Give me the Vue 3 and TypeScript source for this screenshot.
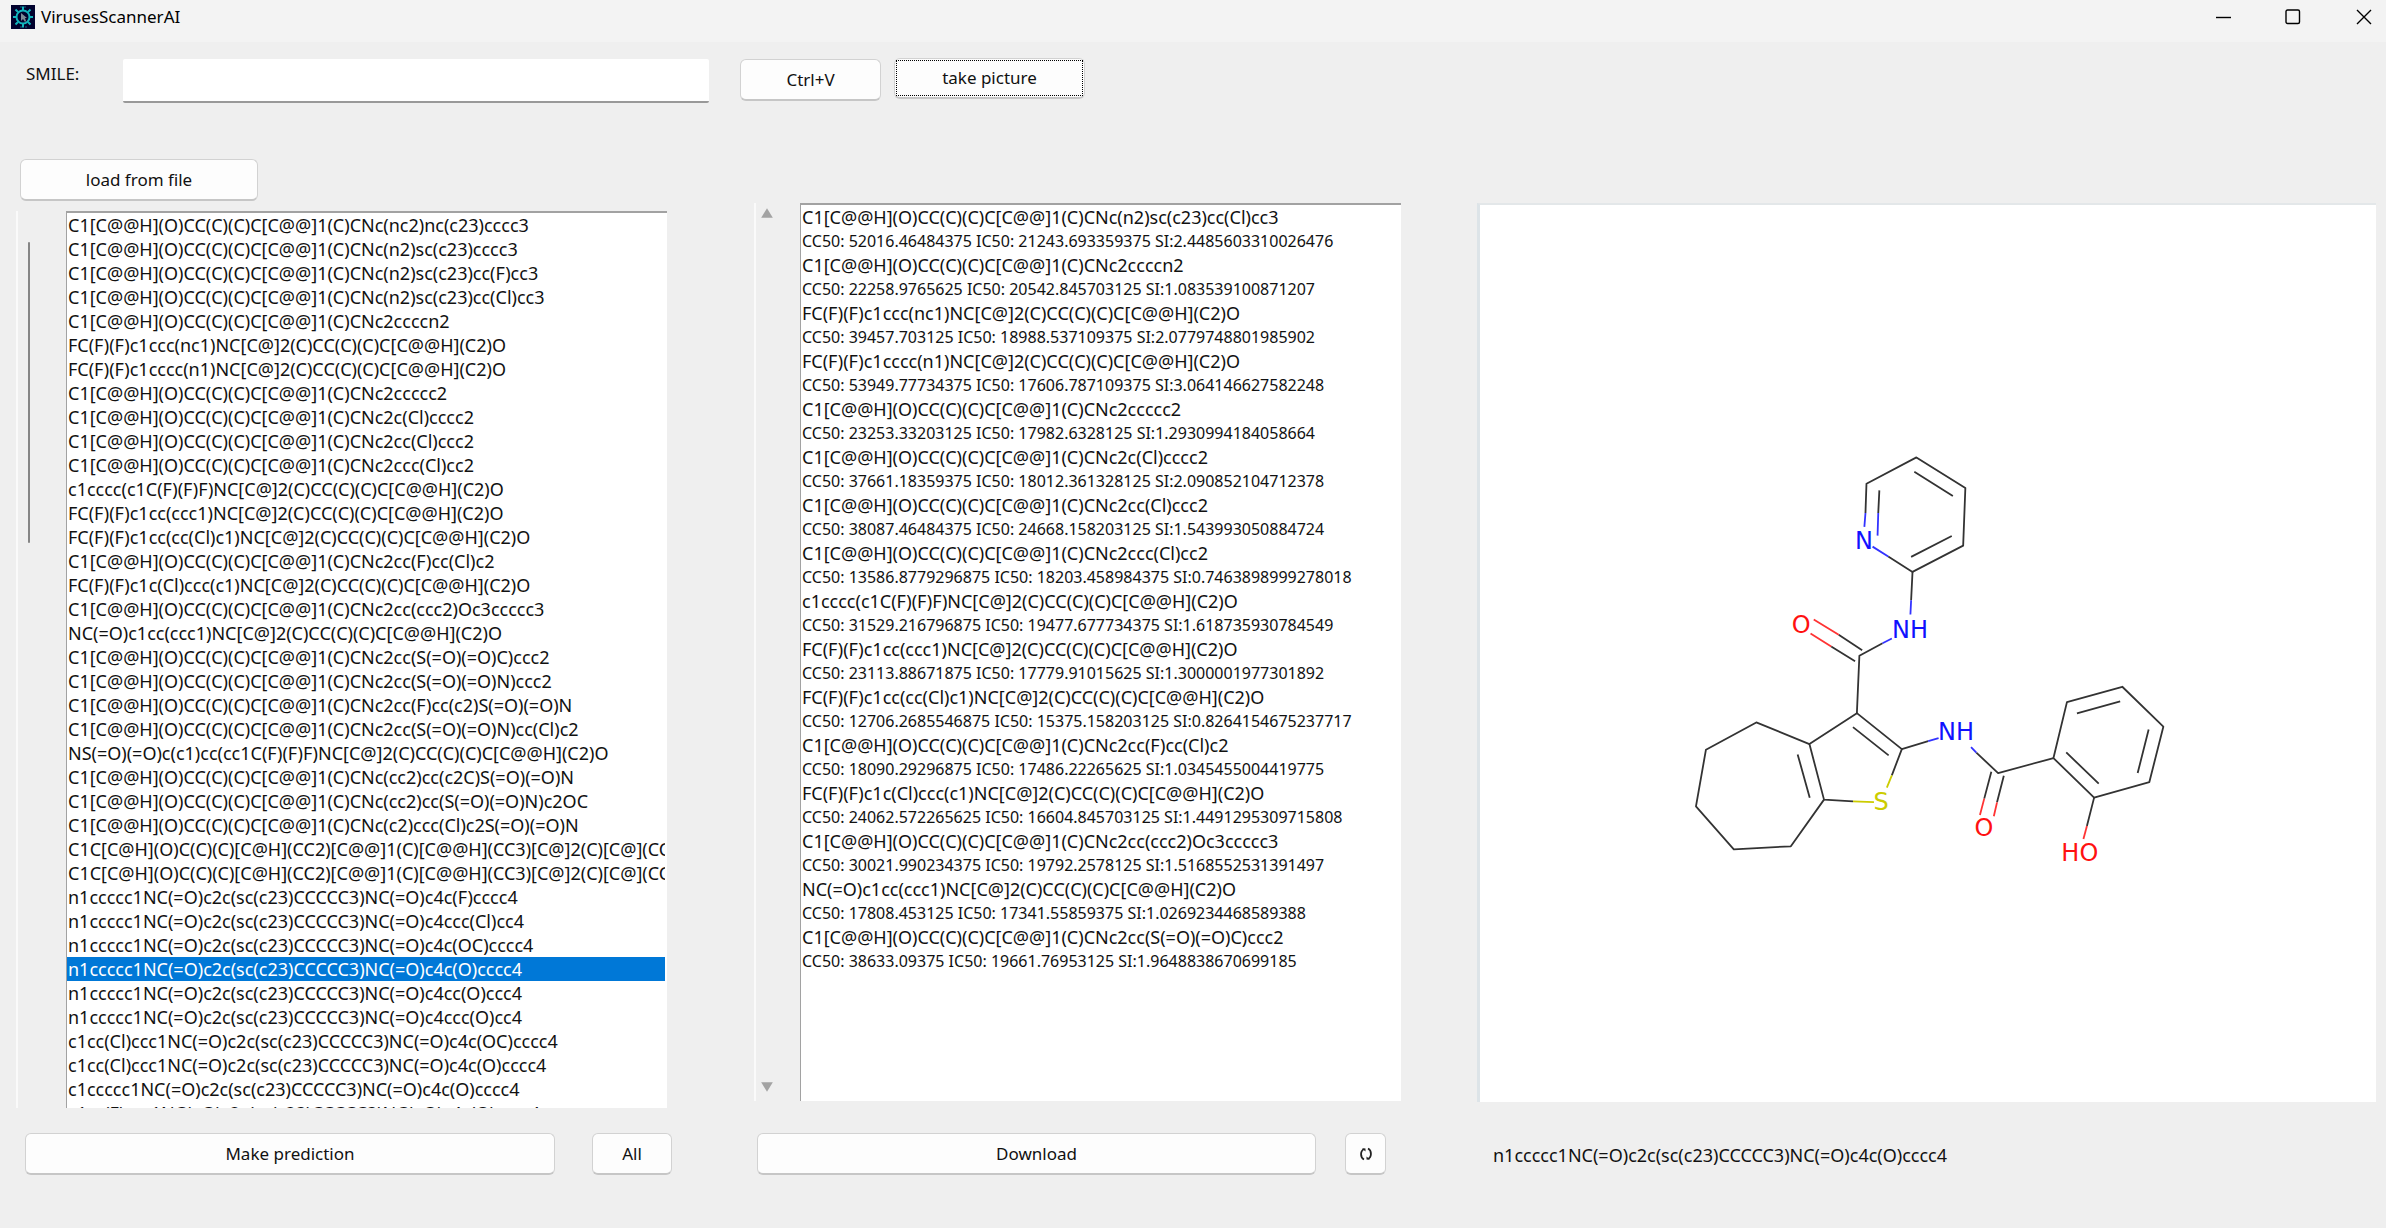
<script setup lang="ts">
import { ref } from 'vue'

interface Result {
  smile: string
  cc50: string
  ic50: string
  si: string
}

interface Atom {
  text: string
  x: number
  y: number
  kind: 'n' | 'o' | 's'
}

interface Bond {
  d: string
  kind: 'c' | 'n' | 'o' | 's'
}

const smile = ref('')
const selected = ref(31)

const smiles: string[] = [
  'C1[C@@H](O)CC(C)(C)C[C@@]1(C)CNc(nc2)nc(c23)cccc3',
  'C1[C@@H](O)CC(C)(C)C[C@@]1(C)CNc(n2)sc(c23)cccc3',
  'C1[C@@H](O)CC(C)(C)C[C@@]1(C)CNc(n2)sc(c23)cc(F)cc3',
  'C1[C@@H](O)CC(C)(C)C[C@@]1(C)CNc(n2)sc(c23)cc(Cl)cc3',
  'C1[C@@H](O)CC(C)(C)C[C@@]1(C)CNc2ccccn2',
  'FC(F)(F)c1ccc(nc1)NC[C@]2(C)CC(C)(C)C[C@@H](C2)O',
  'FC(F)(F)c1cccc(n1)NC[C@]2(C)CC(C)(C)C[C@@H](C2)O',
  'C1[C@@H](O)CC(C)(C)C[C@@]1(C)CNc2ccccc2',
  'C1[C@@H](O)CC(C)(C)C[C@@]1(C)CNc2c(Cl)cccc2',
  'C1[C@@H](O)CC(C)(C)C[C@@]1(C)CNc2cc(Cl)ccc2',
  'C1[C@@H](O)CC(C)(C)C[C@@]1(C)CNc2ccc(Cl)cc2',
  'c1cccc(c1C(F)(F)F)NC[C@]2(C)CC(C)(C)C[C@@H](C2)O',
  'FC(F)(F)c1cc(ccc1)NC[C@]2(C)CC(C)(C)C[C@@H](C2)O',
  'FC(F)(F)c1cc(cc(Cl)c1)NC[C@]2(C)CC(C)(C)C[C@@H](C2)O',
  'C1[C@@H](O)CC(C)(C)C[C@@]1(C)CNc2cc(F)cc(Cl)c2',
  'FC(F)(F)c1c(Cl)ccc(c1)NC[C@]2(C)CC(C)(C)C[C@@H](C2)O',
  'C1[C@@H](O)CC(C)(C)C[C@@]1(C)CNc2cc(ccc2)Oc3ccccc3',
  'NC(=O)c1cc(ccc1)NC[C@]2(C)CC(C)(C)C[C@@H](C2)O',
  'C1[C@@H](O)CC(C)(C)C[C@@]1(C)CNc2cc(S(=O)(=O)C)ccc2',
  'C1[C@@H](O)CC(C)(C)C[C@@]1(C)CNc2cc(S(=O)(=O)N)ccc2',
  'C1[C@@H](O)CC(C)(C)C[C@@]1(C)CNc2cc(F)cc(c2)S(=O)(=O)N',
  'C1[C@@H](O)CC(C)(C)C[C@@]1(C)CNc2cc(S(=O)(=O)N)cc(Cl)c2',
  'NS(=O)(=O)c(c1)cc(cc1C(F)(F)F)NC[C@]2(C)CC(C)(C)C[C@@H](C2)O',
  'C1[C@@H](O)CC(C)(C)C[C@@]1(C)CNc(cc2)cc(c2C)S(=O)(=O)N',
  'C1[C@@H](O)CC(C)(C)C[C@@]1(C)CNc(cc2)cc(S(=O)(=O)N)c2OC',
  'C1[C@@H](O)CC(C)(C)C[C@@]1(C)CNc(c2)ccc(Cl)c2S(=O)(=O)N',
  'C1C[C@H](O)C(C)(C)[C@H](CC2)[C@@]1(C)[C@@H](CC3)[C@]2(C)[C@](CC4)',
  'C1C[C@H](O)C(C)(C)[C@H](CC2)[C@@]1(C)[C@@H](CC3)[C@]2(C)[C@](CC4)',
  'n1ccccc1NC(=O)c2c(sc(c23)CCCCC3)NC(=O)c4c(F)cccc4',
  'n1ccccc1NC(=O)c2c(sc(c23)CCCCC3)NC(=O)c4ccc(Cl)cc4',
  'n1ccccc1NC(=O)c2c(sc(c23)CCCCC3)NC(=O)c4c(OC)cccc4',
  'n1ccccc1NC(=O)c2c(sc(c23)CCCCC3)NC(=O)c4c(O)cccc4',
  'n1ccccc1NC(=O)c2c(sc(c23)CCCCC3)NC(=O)c4cc(O)ccc4',
  'n1ccccc1NC(=O)c2c(sc(c23)CCCCC3)NC(=O)c4ccc(O)cc4',
  'c1cc(Cl)ccc1NC(=O)c2c(sc(c23)CCCCC3)NC(=O)c4c(OC)cccc4',
  'c1cc(Cl)ccc1NC(=O)c2c(sc(c23)CCCCC3)NC(=O)c4c(O)cccc4',
  'c1ccccc1NC(=O)c2c(sc(c23)CCCCC3)NC(=O)c4c(O)cccc4',
  'c1cc(F)ccc1NC(=O)c2c(sc(c23)CCCCC3)NC(=O)c4c(O)cccc4',
]

const results: Result[] = [
  { smile: smiles[3], cc50: '52016.46484375', ic50: '21243.693359375', si: '2.4485603310026476' },
  { smile: smiles[4], cc50: '22258.9765625', ic50: '20542.845703125', si: '1.083539100871207' },
  { smile: smiles[5], cc50: '39457.703125', ic50: '18988.537109375', si: '2.0779748801985902' },
  { smile: smiles[6], cc50: '53949.77734375', ic50: '17606.787109375', si: '3.064146627582248' },
  { smile: smiles[7], cc50: '23253.33203125', ic50: '17982.6328125', si: '1.2930994184058664' },
  { smile: smiles[8], cc50: '37661.18359375', ic50: '18012.361328125', si: '2.090852104712378' },
  { smile: smiles[9], cc50: '38087.46484375', ic50: '24668.158203125', si: '1.543993050884724' },
  { smile: smiles[10], cc50: '13586.8779296875', ic50: '18203.458984375', si: '0.7463898999278018' },
  { smile: smiles[11], cc50: '31529.216796875', ic50: '19477.677734375', si: '1.618735930784549' },
  { smile: smiles[12], cc50: '23113.88671875', ic50: '17779.91015625', si: '1.3000001977301892' },
  { smile: smiles[13], cc50: '12706.2685546875', ic50: '15375.158203125', si: '0.8264154675237717' },
  { smile: smiles[14], cc50: '18090.29296875', ic50: '17486.22265625', si: '1.0345455004419775' },
  { smile: smiles[15], cc50: '24062.572265625', ic50: '16604.845703125', si: '1.4491295309715808' },
  { smile: smiles[16], cc50: '30021.990234375', ic50: '19792.2578125', si: '1.5168552531391497' },
  { smile: smiles[17], cc50: '17808.453125', ic50: '17341.55859375', si: '1.0269234468589388' },
  { smile: smiles[18], cc50: '38633.09375', ic50: '19661.76953125', si: '1.9648838670699185' },
]

const bonds: Bond[] = [
  // pyridine ring
  { kind: 'c', d: 'M385.4 308.3L386.4 279L436.4 252.7L485.4 283.3L483.2 341L432.5 367.3L408.2 352' },
  { kind: 'n', d: 'M385.4 308.3L384.3 322.3M398.2 308.3L397.5 331M392.5 342L408.2 352' },
  { kind: 'c', d: 'M399.3 285.7L398.2 308.3M434.3 267L472.9 291.3M471.8 331.3L431.1 352.3' },
  // first amide
  { kind: 'c', d: 'M432.5 367.3L431.1 395.7M402.5 438.7L379.3 451.3L376.8 508.7' },
  { kind: 'n', d: 'M431.1 395.7L430.4 410M411.8 434L402.5 438.7' },
  { kind: 'c', d: 'M382.1 445.7L358.6 430.3M375 456.7L351.1 442' },
  { kind: 'o', d: 'M358.6 430.3L333.6 415M351.1 442L330.4 429' },
  // thiophene ring
  { kind: 'c', d: 'M411.8 571L421.8 544.7L376.8 508.7L329.3 539.7L343.9 595.3L372.9 597' },
  { kind: 'c', d: 'M372.9 522.7L408.6 551M317.5 550L329.6 593.3' },
  { kind: 's', d: 'M372.9 597L393.9 597.7M406.8 583.3L411.8 571' },
  // cycloheptane ring
  { kind: 'c', d: 'M329.3 539.7L276.1 518L225.7 545.3L215.7 602L253.6 645L310.7 642L343.9 595.3' },
  // second amide
  { kind: 'c', d: 'M421.8 544.7L448.2 536.7M496.4 548.3L518.2 568.7L573.6 553.7' },
  { kind: 'n', d: 'M448.2 536.7L458.6 533.7M491.1 542.7L496.4 548.3' },
  { kind: 'c', d: 'M511.4 567.3L504.3 594.3M523.9 571.3L517.1 598' },
  { kind: 'o', d: 'M504.3 594.3L500 610.7M517.1 598L513.9 612' },
  // phenol ring
  { kind: 'c', d: 'M573.6 553.7L587.1 497.7L642.5 482.3L683.6 522.3L669.6 577.7L614.3 593.3Z' },
  { kind: 'c', d: 'M597.1 509L640.4 497M668.9 525L657.9 568.7M618.9 579.3L586.4 548M614.3 593.3L607.1 621.7' },
  { kind: 'o', d: 'M607.1 621.7L603.6 634.7' },
]

const atoms: Atom[] = [
  { text: 'N', x: 384, y: 344, kind: 'n' },
  { text: 'NH', x: 430, y: 433, kind: 'n' },
  { text: 'O', x: 321, y: 428, kind: 'o' },
  { text: 'S', x: 401, y: 606, kind: 's' },
  { text: 'NH', x: 476, y: 536, kind: 'n' },
  { text: 'O', x: 504, y: 632, kind: 'o' },
  { text: 'HO', x: 600, y: 657, kind: 'o' },
]
</script>

<template>
  <div class="window">
    <header class="titlebar">
      <svg class="app-icon" viewBox="0 0 24 24" aria-hidden="true">
        <rect width="24" height="24" fill="#02022e" />
        <g fill="none" stroke="#12b5bd">
          <circle cx="12" cy="12" r="6.5" stroke-width="2" />
          <path
            d="M12 5V1.5M12 19v3.5M5 12H2M19 12h3M7 7L4.500 4.500M17 7l2.500-2.500M7 17l-2.500 2.500M17 17l2.500 2.500"
            stroke-width="2"
          />
          <path d="M9 2h2M13 2h2M9 22h2M14 22h2" stroke-width="1" opacity="0.600" />
        </g>
        <path d="M10 8v8l2-2 2 3 1-1-1-3h2z" fill="#7d8a94" />
      </svg>
      <h1 class="title">VirusesScannerAI</h1>
      <div class="window-controls">
        <button type="button" aria-label="Minimize">
          <svg viewBox="0 0 16 16"><path d="M1 8.500H16" /></svg>
        </button>
        <button type="button" aria-label="Maximize">
          <svg viewBox="0 0 16 16"><rect x="1" y="1" width="13.500" height="13.500" rx="1.500" /></svg>
        </button>
        <button type="button" aria-label="Close">
          <svg viewBox="0 0 16 16"><path d="M1 1L15 15M15 1L1 15" /></svg>
        </button>
      </div>
    </header>

    <form class="toolbar" @submit.prevent>
      <div class="entry">
        <label for="smile">SMILE:</label>
        <input id="smile" v-model="smile" type="text" />
      </div>
      <div class="entry-actions">
        <button type="button" class="btn paste">Ctrl+V</button>
        <button type="button" class="btn picture"><span>take picture</span></button>
      </div>
    </form>

    <main class="columns">
      <section class="column source">
        <button type="button" class="btn load">load from file</button>
        <div class="list-row">
          <div class="track"><div class="thumb"></div></div>
          <ul class="listbox" role="listbox" aria-label="Molecules">
            <li
              v-for="(item, i) in smiles"
              :key="i"
              role="option"
              :aria-selected="i === selected"
              :class="{ selected: i === selected }"
              @click="selected = i"
            >{{ item }}</li>
          </ul>
        </div>
        <div class="actions">
          <button type="button" class="btn wide">Make prediction</button>
          <button type="button" class="btn all">All</button>
        </div>
      </section>

      <section class="column results">
        <div class="list-row">
          <div class="track arrows">
            <svg viewBox="0 0 12 10" aria-hidden="true"><path d="M6 1L11 9H1z" /></svg>
            <svg viewBox="0 0 12 10" aria-hidden="true"><path d="M6 9L11 1H1z" /></svg>
          </div>
          <ul class="listbox" role="listbox" aria-label="Predictions">
            <template v-for="(r, i) in results" :key="i">
              <li role="option">{{ r.smile }}</li>
              <li role="option" class="values">CC50: {{ r.cc50 }} IC50: {{ r.ic50 }} SI:{{ r.si }}</li>
            </template>
          </ul>
        </div>
        <div class="actions">
          <button type="button" class="btn wide">Download</button>
          <button type="button" class="btn refresh" aria-label="Refresh">
            <svg viewBox="0 0 14 14" aria-hidden="true">
              <path d="M5.500 2C1 3.500 1 10.500 5 12.500M8.500 12C13 10.500 13 3.500 9 1.500" />
              <path class="tip" d="M3 1.500h3.500v3zM11 12.500H7.500v-3z" />
            </svg>
          </button>
        </div>
      </section>

      <section class="column preview">
        <figure>
          <div class="canvas">
            <svg viewBox="0 0 896 898" role="img" aria-label="Molecule structure">
              <path v-for="(b, i) in bonds" :key="i" :d="b.d" :class="['bond', b.kind]" />
              <text v-for="(a, i) in atoms" :key="i" :x="a.x" :y="a.y" :class="['atom', a.kind]">{{ a.text }}</text>
            </svg>
          </div>
          <figcaption>{{ smiles[selected] }}</figcaption>
        </figure>
      </section>
    </main>
  </div>
</template>

<style>
body {
  margin: 0;
}
</style>

<style scoped>
.window {
  display: flex;
  flex-direction: column;
  height: 100vh;
  background: #efefef;
  color: #111;
  font: 17px/24px "Noto Sans", "Open Sans", sans-serif;
}

.titlebar {
  display: flex;
  flex: none;
  align-items: flex-start;
  height: 42px;
  background: #f3f3f3;
}

.app-icon {
  width: 24px;
  height: 24px;
  margin: 5px 6px 0 11px;
}

.title {
  margin: 5px 0 0;
  font-size: 17px;
  font-weight: 400;
  line-height: 24px;
  color: #000;
}

.window-controls {
  display: flex;
  margin-left: auto;
}

.window-controls button {
  display: flex;
  align-items: center;
  justify-content: center;
  width: 70px;
  height: 34px;
  margin: 0;
  padding: 0;
  border: 0;
  background: none;
}

.window-controls button:last-child {
  width: 44px;
  margin-left: 14px;
}

.window-controls svg {
  width: 16px;
  height: 16px;
  fill: none;
  stroke: #000;
  stroke-width: 1.4;
}

.btn {
  box-sizing: border-box;
  height: 42px;
  padding: 0;
  border: 1px solid #d2d2d2;
  border-bottom: 2px solid #c6c6c6;
  border-radius: 6px;
  background: #fdfdfd;
  color: #111;
  font: inherit;
}

.toolbar,
.columns {
  display: grid;
  grid-template-columns: 738fr 739fr 909fr;
}

.toolbar {
  flex: none;
  height: 117px;
}

.entry {
  display: flex;
  align-items: flex-start;
  padding: 17px 29px 0 26px;
}

.entry label {
  flex: none;
  width: 97px;
  margin-top: 3px;
}

.entry input {
  box-sizing: border-box;
  flex: 1;
  min-width: 0;
  height: 44px;
  padding: 0 8px;
  border: 0;
  border-bottom: 2px solid #999;
  border-radius: 2px;
  background: #fff;
  font: inherit;
}

.entry-actions {
  display: flex;
  align-items: flex-start;
  gap: 13px;
  padding: 17px 0 0 2px;
}

.paste {
  width: 141px;
}

.picture {
  display: flex;
  width: 191px;
  height: 41px;
  margin-top: -1px;
  padding: 1px;
}

.picture span {
  display: flex;
  flex: 1;
  align-items: center;
  justify-content: center;
  align-self: stretch;
  border: 1px dotted #000;
}

.columns {
  flex: 1;
  min-height: 0;
}

.column {
  display: flex;
  flex-direction: column;
  min-width: 0;
  min-height: 0;
}

.load {
  flex: none;
  width: 238px;
  margin-left: 20px;
}

.list-row {
  display: flex;
  flex: 1;
  min-height: 0;
}

.source .list-row {
  margin: 10px 71px 25px 16px;
}

.results .list-row {
  margin: 44px 76px 32px 16px;
}

.track {
  box-sizing: border-box;
  flex: none;
  width: 50px;
  padding: 31px 0 0 10px;
  border-left: 2px solid #fafafa;
}

.thumb {
  width: 2px;
  height: 301px;
  border-radius: 1px;
  background: #858585;
}

.arrows {
  display: flex;
  flex-direction: column;
  justify-content: space-between;
  width: 46px;
  padding: 4px 0 8px 4px;
}

.arrows svg {
  width: 14px;
  height: 12px;
  fill: #a3a3a3;
}

.listbox {
  box-sizing: border-box;
  flex: 1;
  min-width: 0;
  margin: 0;
  padding: 0 2px 2px 0;
  overflow: hidden;
  border-top: 2px solid #a2a2a2;
  border-left: 1px solid #a2a2a2;
  background: #fff;
  font-size: 18px;
  list-style: none;
}

.listbox li {
  height: 24px;
  padding-left: 1px;
  overflow: hidden;
  white-space: nowrap;
}

.listbox .values {
  font-size: 16px;
}

.listbox .selected {
  background: #0078d7;
  color: #fff;
}

.actions {
  display: flex;
  flex: none;
  padding-bottom: 53px;
}

.source .actions {
  gap: 37px;
  margin: 0 66px 0 25px;
}

.results .actions {
  gap: 29px;
  margin: 0 91px 0 19px;
}

.wide {
  flex: 1;
}

.all {
  width: 80px;
}

.refresh {
  display: flex;
  align-items: center;
  justify-content: center;
  width: 41px;
}

.refresh svg {
  width: 14px;
  height: 14px;
  fill: none;
  stroke: #222;
  stroke-width: 1.8;
}

.refresh .tip {
  fill: #222;
  stroke: none;
}

figure {
  display: flex;
  flex: 1;
  flex-direction: column;
  min-height: 0;
  margin: 44px 10px 0 0;
}

.canvas {
  box-sizing: border-box;
  display: flex;
  flex: 1;
  min-height: 0;
  border-top: 2px solid #e3e7e9;
  border-left: 3px solid #dde4e8;
  background: #fff;
}

.canvas svg {
  width: 100%;
  height: 100%;
}

figcaption {
  height: 85px;
  padding: 41px 0 0 16px;
  font-size: 18px;
}

.bond {
  fill: none;
  stroke-width: 1.8;
  stroke-linejoin: round;
}

.bond.c {
  stroke: #333;
}

.bond.n {
  stroke: #33f;
}

.bond.o {
  stroke: #f33;
}

.bond.s {
  stroke: #cc0;
}

.atom {
  font: 24px "DejaVu Sans", sans-serif;
  text-anchor: middle;
}

.atom.n {
  fill: #11f;
}

.atom.o {
  fill: #f11;
}

.atom.s {
  fill: #cc0;
}
</style>
